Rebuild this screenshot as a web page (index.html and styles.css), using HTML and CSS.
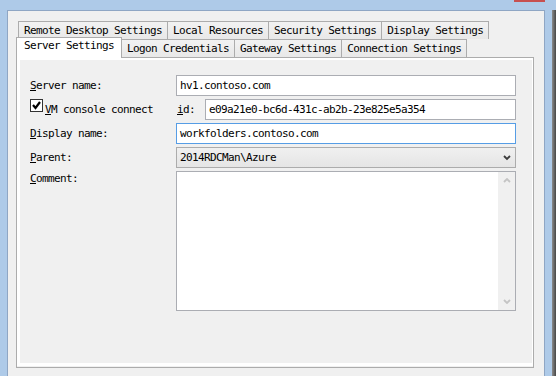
FILE: index.html
```html
<!DOCTYPE html>
<html lang="en">

<head>
  <title>Add Server</title>
  <meta charset="UTF-8">
  <link rel="stylesheet" href="styles.css">
</head>

<body>
  <div class="titulo">
    <span></span>
    <h1>Add Server</h1>
    <span class="fechar"></span>
  </div>
  <div class="moldura">
    <div class="cliente">
      <div class="abas">
        <div class="linha-abas">
          <span class="aba">Remote Desktop Settings</span>
          <span class="aba">Local Resources</span>
          <span class="aba">Security Settings</span>
          <span class="aba">Display Settings</span>
        </div>
        <div class="linha-abas">
          <span class="aba ativa">Server Settings</span>
          <span class="aba">Logon Credentials</span>
          <span class="aba">Gateway Settings</span>
          <span class="aba">Connection Settings</span>
        </div>
      </div>
      <div class="painel">
        <div class="formulario">
          <span class="rotulo"><u>S</u>erver name:</span>
          <div class="campo">hv1.contoso.com</div>

          <div class="checar">
            <span class="caixa">
              <svg width="11" height="11" viewBox="0 0 11 11">
                <polyline points="2,5 4.5,8 9,2" fill="none" stroke="black" stroke-width="2.2" />
              </svg>
            </span>
            <span><u>V</u>M console connect</span>
          </div>
          <div class="linha-id">
            <span class="rotulo-id"><u>i</u>d:</span>
            <div class="campo">e09a21e0-bc6d-431c-ab2b-23e825e5a354</div>
          </div>

          <span class="rotulo"><u>D</u>isplay name:</span>
          <div class="campo foco">workfolders.contoso.com</div>

          <span class="rotulo"><u>P</u>arent:</span>
          <div class="campo combo">
            <span>2014RDCMan\Azure</span>
            <svg width="8" height="6" viewBox="0 0 8 6">
              <polyline points="1,1 4,4 7,1" fill="none" stroke="rgb(60,60,60)" stroke-width="1.8" />
            </svg>
          </div>

          <span class="rotulo rotulo-topo"><u>C</u>omment:</span>
          <div class="campo comentario">
            <div class="rolagem">
              <svg width="8" height="5" viewBox="0 0 8 5">
                <polyline points="1,4 4,1 7,4" fill="none" stroke="rgb(196,196,196)" stroke-width="1.8" />
              </svg>
              <svg width="8" height="5" viewBox="0 0 8 5">
                <polyline points="1,1 4,4 7,1" fill="none" stroke="rgb(196,196,196)" stroke-width="1.8" />
              </svg>
            </div>
          </div>
        </div>
      </div>
    </div>
    <div class="sombra"></div>
  </div>
</body>

</html>
```

FILE: styles.css
```css
* {
  margin: 0;
  padding: 0;
  box-sizing: border-box;
}

body {
  width: 556px;
  height: 376px;
  overflow: hidden;
  background-color: rgb(174, 202, 232);
  font-family: 'DejaVu Sans Mono', monospace;
  font-size: 11px;
  letter-spacing: -0.62px;
  color: black;
}

.titulo {
  height: 10px;
  display: grid;
  grid-template-columns: 1fr auto 1fr;
  overflow: hidden;
}

.titulo h1 {
  font-family: 'Noto Sans', sans-serif;
  font-weight: normal;
  font-size: 15px;
  line-height: 15px;
  letter-spacing: 0.4px;
  margin-top: -13px;
  color: rgb(25, 25, 25);
}

.fechar {
  justify-self: end;
  width: 31px;
  height: 2px;
  margin-right: 11px;
  background-color: rgb(199, 80, 80);
}

.moldura {
  display: flex;
  height: 366px;
  padding-left: 7px;
}

.cliente {
  width: 538px;
  border: 1px solid rgb(143, 166, 196);
  border-bottom: none;
  background-color: rgb(240, 240, 240);
  padding: 10px 0 0 8px;
}

.sombra {
  width: 4px;
  margin-left: 7px;
  background: linear-gradient(to right, rgb(140, 140, 140), rgb(70, 70, 70));
}

.abas {
  width: 518px;
}

.linha-abas {
  display: flex;
  height: 18px;
  padding-left: 2px;
}

.aba {
  height: 18px;
  line-height: 17px;
  padding: 0 5px;
  margin-right: -1px;
  border: 1px solid rgb(172, 172, 172);
  border-bottom: none;
  background: linear-gradient(rgb(242, 242, 242), rgb(232, 232, 232));
  white-space: nowrap;
}

.aba.ativa {
  position: relative;
  z-index: 1;
  height: 21px;
  line-height: 16px;
  padding: 0 7px;
  margin: -2px -1px -1px -2px;
  background: white;
}

.painel {
  width: 518px;
  height: 311px;
  border: 1px solid rgb(172, 172, 172);
  background-color: rgb(240, 240, 240);
  box-shadow: inset 0 -1px 0 rgb(240, 240, 240), inset 0 -4px 0 white, inset 3px 2px 0 white, inset -1px 0 0 white;
  padding: 17px 17px 0 13px;
}

.formulario {
  display: grid;
  grid-template-columns: 146px 340px;
  grid-template-rows: repeat(4, 21px) 140px;
  row-gap: 3px;
  align-items: center;
}

.rotulo-topo {
  align-self: start;
  line-height: 14px;
  padding-top: 1px;
}

.campo {
  height: 21px;
  border: 1px solid rgb(171, 173, 179);
  background-color: white;
  padding: 0 3px;
  line-height: 19px;
  white-space: nowrap;
  overflow: hidden;
}

.campo.foco {
  border-color: rgb(86, 157, 229);
}

.combo {
  display: flex;
  justify-content: space-between;
  align-items: center;
  padding-right: 4px;
  border-color: rgb(172, 172, 172);
  background: linear-gradient(rgb(240, 240, 240), rgb(229, 229, 229));
}

.checar {
  display: flex;
  align-items: center;
  gap: 2px;
  align-self: stretch;
}

.caixa {
  display: flex;
  align-self: flex-start;
  width: 13px;
  height: 13px;
  border: 1px solid rgb(51, 51, 51);
  background-color: white;
}

.linha-id {
  display: flex;
  align-items: center;
}

.rotulo-id {
  width: 29px;
  padding-left: 1px;
}

.linha-id .campo {
  flex: 1;
}

.comentario {
  height: 140px;
  display: flex;
  justify-content: flex-end;
  padding: 0;
}

.rolagem {
  width: 17px;
  background-color: rgb(240, 240, 240);
  display: flex;
  flex-direction: column;
  justify-content: space-between;
  align-items: center;
  padding: 6px 0;
}
```
